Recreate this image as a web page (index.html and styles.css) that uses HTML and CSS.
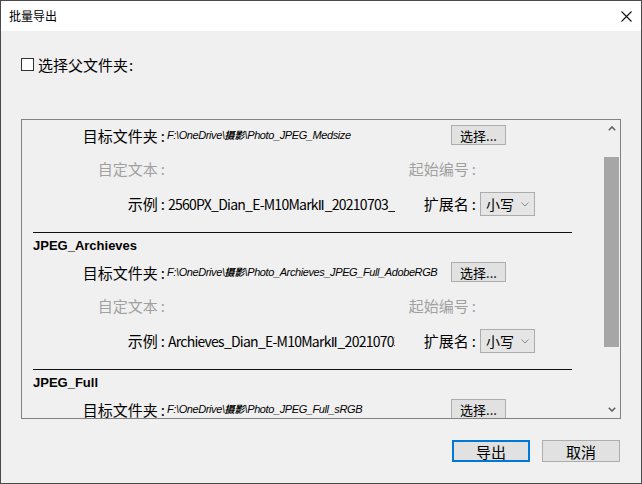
FILE: index.html
```html
<!DOCTYPE html>
<html lang="zh-CN">
<head>
<meta charset="utf-8">
<title>批量导出</title>
<link rel="stylesheet" href="styles.css">
</head>
<body>
<div class="window">
  <div class="titlebar">
    <span class="title">批量导出</span>
    <svg class="close" width="11" height="11" viewBox="0 0 11 11"><path d="M0.5 0.5 L10.5 10.5 M10.5 0.5 L0.5 10.5" stroke="#111" stroke-width="1.1" fill="none"/></svg>
  </div>
  <div class="body">
    <div class="check"><span class="box"></span><span>选择父文件夹<span class="c">:</span></span></div>
    <div class="panel">
      <div class="content">
        <div class="sec">
          <div class="row target">
            <span class="lbl">目标文件夹<span class="c">:</span></span>
            <span class="path">F:\OneDrive\<i class="cjk">摄影</i>\Photo_JPEG_Medsize</span>
            <span class="btn small">选择...</span>
          </div>
          <div class="row custom">
            <span class="lbl dis">自定文本<span class="c">:</span></span>
            <span class="val"></span>
            <span class="rlbl dis">起始编号<span class="c">:</span></span>
          </div>
          <div class="row example">
            <span class="lbl">示例<span class="c">:</span></span>
            <span class="val">2560PX_Dian_E-M10Mark<span class="rn">Ⅱ</span>_20210703_(</span>
            <span class="rlbl">扩展名<span class="c">:</span></span>
            <span class="select">小写<svg width="8" height="5" viewBox="0 0 8 5"><path d="M0.5 0.5 L4 4 L7.5 0.5" stroke="#8a8a8a" stroke-width="1" fill="none"/></svg></span>
          </div>
        </div>
        <div class="sec">
          <div class="rule"></div>
          <div class="head">JPEG_Archieves</div>
          <div class="row target">
            <span class="lbl">目标文件夹<span class="c">:</span></span>
            <span class="path">F:\OneDrive\<i class="cjk">摄影</i>\Photo_Archieves_JPEG_Full_AdobeRGB</span>
            <span class="btn small">选择...</span>
          </div>
          <div class="row custom">
            <span class="lbl dis">自定文本<span class="c">:</span></span>
            <span class="val"></span>
            <span class="rlbl dis">起始编号<span class="c">:</span></span>
          </div>
          <div class="row example">
            <span class="lbl">示例<span class="c">:</span></span>
            <span class="val">Archieves_Dian_E-M10Mark<span class="rn">Ⅱ</span>_20210703</span>
            <span class="rlbl">扩展名<span class="c">:</span></span>
            <span class="select">小写<svg width="8" height="5" viewBox="0 0 8 5"><path d="M0.5 0.5 L4 4 L7.5 0.5" stroke="#8a8a8a" stroke-width="1" fill="none"/></svg></span>
          </div>
        </div>
        <div class="sec">
          <div class="rule"></div>
          <div class="head">JPEG_Full</div>
          <div class="row target">
            <span class="lbl">目标文件夹<span class="c">:</span></span>
            <span class="path">F:\OneDrive\<i class="cjk">摄影</i>\Photo_JPEG_Full_sRGB</span>
            <span class="btn small">选择...</span>
          </div>
        </div>
      </div>
      <div class="scrollbar">
        <div class="arrow"><svg width="8" height="5" viewBox="0 0 8 5"><path d="M0.8 4.2 L4 1 L7.2 4.2" stroke="#606060" stroke-width="1.6" fill="none"/></svg></div>
        <div class="track"><div class="thumb"></div></div>
        <div class="arrow"><svg width="8" height="5" viewBox="0 0 8 5"><path d="M0.8 0.8 L4 4 L7.2 0.8" stroke="#606060" stroke-width="1.6" fill="none"/></svg></div>
      </div>
    </div>
    <div class="actions">
      <span class="btn big primary">导出</span>
      <span class="btn big">取消</span>
    </div>
  </div>
</div>
</body>
</html>
```
FILE: styles.css
```css
* { box-sizing: border-box; }
html, body { margin: 0; padding: 0; }
body {
  font-family: "Noto Sans CJK SC", "Noto Sans", sans-serif;
  color: #000;
  background: #f0f0f0;
}
.window {
  width: 642px;
  height: 484px;
  border: 1px solid #4a4a4a;
  background: #f0f0f0;
  display: flex;
  flex-direction: column;
}
.titlebar {
  height: 30px;
  background: #fff;
  display: flex;
  align-items: center;
  justify-content: space-between;
  padding: 0 9px 0 8px;
  flex: none;
}
.title { font-size: 12px; line-height: 1; }
.close { display: block; }
.body {
  flex: 1;
  display: flex;
  flex-direction: column;
  padding-top: 23px;
}
.c { margin-left: 3px; }
.check {
  display: flex;
  align-items: center;
  height: 20px;
  margin-left: 20px;
  font-size: 15px;
  line-height: 1;
}
.check .c { margin-left: 1px; }
.box {
  width: 13px;
  height: 13px;
  border: 1px solid #333;
  background: #fff;
  margin-right: 4px;
  flex: none;
}
.panel {
  margin: 45px 0 0 20px;
  width: 600px;
  height: 300px;
  border: 1px solid #828282;
  display: flex;
  overflow: hidden;
}
.content {
  flex: 1;
  overflow: hidden;
}
.row {
  display: flex;
  align-items: center;
  font-size: 15px;
  line-height: 1;
  white-space: nowrap;
}
.row.target { height: 30px; }
.row.custom { height: 36px; }
.row.example { height: 35px; margin-bottom: 11px; }
.lbl {
  width: 145px;
  padding-right: 2px;
  text-align: right;
  flex: none;
}
.rlbl {
  width: 85px;
  padding-right: 4px;
  text-align: right;
  flex: none;
}
.dis { color: #a0a0a0; }
.path {
  width: 284px;
  flex: none;
  overflow: hidden;
  font-family: "Liberation Sans", "Noto Sans CJK SC", sans-serif;
  font-style: italic;
  font-size: 11px;
  letter-spacing: -0.4px;
}
.cjk { font-size: 10px; letter-spacing: 0; font-weight: bold; }
.val {
  width: 228px;
  flex: none;
  overflow: hidden;
  font-size: 14px;
  letter-spacing: -0.75px;
  height: 20px;
  line-height: 20px;
  padding-left: 1px;
}
.rn { font-family: "DejaVu Sans", sans-serif; font-size: 14px; letter-spacing: 0; }
.btn {
  display: flex;
  align-items: center;
  justify-content: center;
  background: #e1e1e1;
  border: 1px solid #adadad;
  line-height: 1;
}
.btn.small {
  width: 55px;
  height: 20px;
  font-size: 13px;
  flex: none;
}
.select {
  width: 55px;
  height: 24px;
  flex: none;
  display: flex;
  align-items: center;
  justify-content: space-between;
  padding: 0 5px;
  background: #e5e5e5;
  border: 1px solid #acacac;
  font-size: 14px;
}
.select svg { display: block; margin-top: 2px; }
.rule {
  margin-left: 11px;
  width: 539px;
  height: 1px;
  background: #111;
}
.head {
  height: 24px;
  padding-left: 11px;
  display: flex;
  align-items: center;
  font-family: "Liberation Sans", sans-serif;
  font-weight: bold;
  font-size: 13px;
}
.scrollbar {
  width: 17px;
  flex: none;
  display: flex;
  flex-direction: column;
  background: #f0f0f0;
}
.arrow {
  height: 17px;
  display: flex;
  align-items: center;
  justify-content: center;
  flex: none;
}
.arrow svg { display: block; }
.track { flex: 1; padding: 20px 1px 0 1px; }
.thumb { height: 190px; background: #a6a6a6; }
.actions {
  display: flex;
  justify-content: flex-end;
  gap: 12px;
  margin-top: 21px;
  padding-right: 21px;
}
.btn.big {
  width: 78px;
  height: 22px;
  font-size: 15px;
}
.btn.primary { border: 2px solid #0078d7; }
```
